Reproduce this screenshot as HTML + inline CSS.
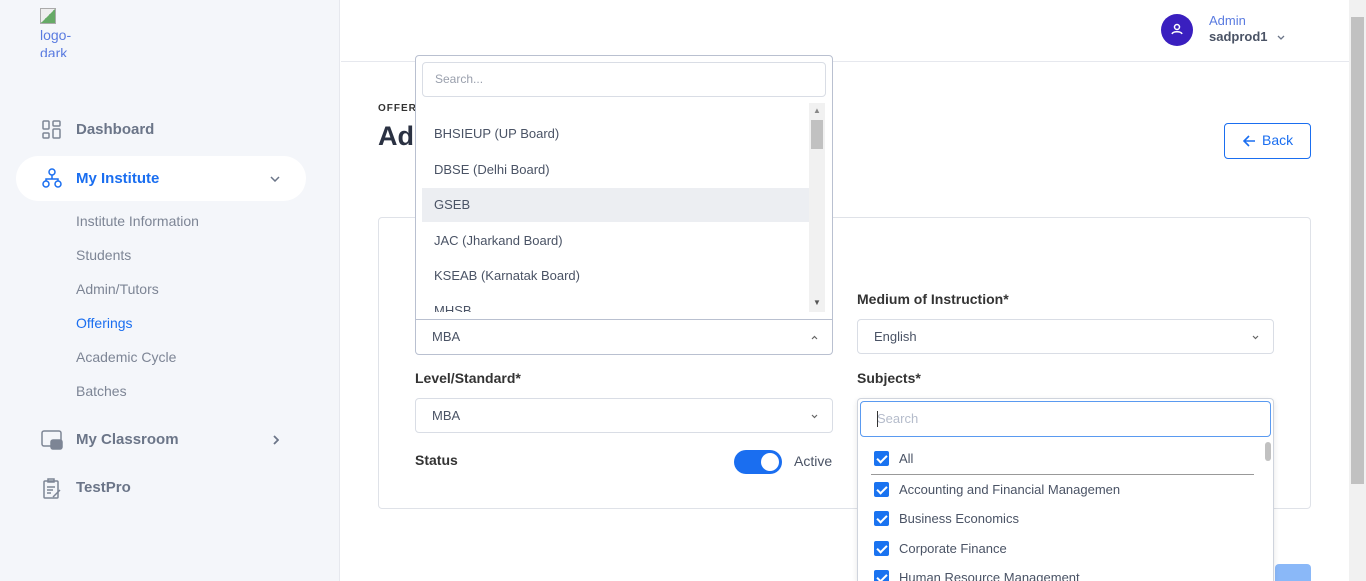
<!DOCTYPE html><html style="width:1366px;height:581px;overflow:hidden"><head><style>
*{box-sizing:border-box;margin:0;padding:0}
body{width:1366px;height:581px;overflow:hidden;font-family:"Liberation Sans",sans-serif;background:#fff;position:relative;color:#333}
.a{position:absolute}
.sb{left:0;top:0;width:340px;height:581px;background:#f4f6fa;border-right:1px solid #e6e8ee}
.nav{font-weight:bold;font-size:15px;color:#6b7588}
.sub{font-size:14px;color:#7d8595;left:76px}
.lbl{font-size:14px;color:#333;font-weight:bold}
.sel{border:1px solid #d9dde5;border-radius:4px;background:#fff;font-size:13px;color:#4a5365;padding-left:16px;line-height:34px}
.opt{left:434px;font-size:13px;color:#4a5365}
.cb{width:15px;height:15px;background:#1a73f0;border-radius:2px;left:874px}
.cb:after{content:"";position:absolute;left:5px;top:2px;width:4px;height:8px;border:solid #fff;border-width:0 2px 2px 0;transform:rotate(45deg)}
.ct{left:899px;font-size:13px;color:#4a5365}
</style></head><body>
<div class="a sb"></div>
<div class="a" style="left:40px;top:8px;width:16px;height:16px;border:1px solid #aaa;background:linear-gradient(135deg,#eee 50%,#6a6 50%)"></div>
<div class="a" style="left:40px;top:26px;font-size:14px;color:#5a7be0;line-height:18px;height:31px;overflow:hidden">logo-<br>dark</div>
<svg class="a" style="left:42px;top:120px" width="20" height="20" fill="none" stroke="#7d8595" stroke-width="1.5"><rect x="1" y="1" width="6" height="8" rx="1"/><rect x="11" y="1" width="7" height="5" rx="1"/><rect x="1" y="13" width="6" height="5" rx="1"/><rect x="11" y="9" width="7" height="9" rx="1"/></svg>
<div class="a nav" style="left:76px;top:121px">Dashboard</div>
<div class="a" style="left:16px;top:156px;width:290px;height:45px;background:#fff;border-radius:23px"></div>
<svg class="a" style="left:42px;top:168px" width="20" height="21" fill="none" stroke="#1a6ef0" stroke-width="1.5"><circle cx="10" cy="4" r="3"/><circle cx="4" cy="16" r="3"/><circle cx="16" cy="16" r="3"/><path d="M10 7v4M4 13v-2h12v2"/></svg>
<div class="a nav" style="left:76px;top:170px;color:#1a6ef0">My Institute</div>
<svg class="a" style="left:270px;top:176px" width="10" height="6" fill="none" stroke="#6b7588" stroke-width="1.5"><path d="M1 1l4 4 4-4"/></svg>
<div class="a sub" style="top:213px">Institute Information</div>
<div class="a sub" style="top:247px">Students</div>
<div class="a sub" style="top:281px">Admin/Tutors</div>
<div class="a sub" style="top:315px;color:#1a6ef0">Offerings</div>
<div class="a sub" style="top:349px">Academic Cycle</div>
<div class="a sub" style="top:383px">Batches</div>
<svg class="a" style="left:41px;top:430px" width="22" height="20" fill="none" stroke="#7d8595" stroke-width="1.5"><rect x="1" y="1" width="19" height="15" rx="2"/><rect x="10" y="10" width="11" height="9" rx="2" fill="#7d8595"/></svg>
<div class="a nav" style="left:76px;top:431px">My Classroom</div>
<svg class="a" style="left:273px;top:435px" width="6" height="10" fill="none" stroke="#6b7588" stroke-width="1.8"><path d="M1 1l4 4-4 4"/></svg>
<svg class="a" style="left:43px;top:478px" width="19" height="21" fill="none" stroke="#7d8595" stroke-width="1.5"><rect x="1" y="3" width="14" height="17" rx="1"/><rect x="5" y="1" width="6" height="3"/><path d="M4 9h8M4 12h6M4 15h4M10 19l7-7"/></svg>
<div class="a nav" style="left:76px;top:479px">TestPro</div>
<div class="a" style="left:341px;top:61px;width:1008px;height:1px;background:#e6e8ee"></div>
<div class="a" style="left:1161px;top:14px;width:32px;height:32px;border-radius:50%;background:#3a1fbf"></div>
<svg class="a" style="left:1171px;top:23px" width="12" height="12" fill="none" stroke="#fff" stroke-width="1.5"><circle cx="6" cy="4" r="2.5"/><path d="M1 11c1-3 9-3 10 0"/></svg>
<div class="a" style="left:1209px;top:13px;font-size:13px;color:#5a7be0">Admin</div>
<div class="a" style="left:1209px;top:29px;font-size:13px;color:#4a5365;font-weight:bold">sadprod1</div>
<svg class="a" style="left:1277px;top:35px" width="8" height="5" fill="none" stroke="#6b7588" stroke-width="1.3"><path d="M1 1l3 3 3-3"/></svg>
<div class="a" style="left:1349px;top:0;width:17px;height:581px;background:#f1f1f1"></div>
<div class="a" style="left:1351px;top:17px;width:13px;height:467px;background:#c1c1c1"></div>
<div class="a" style="left:378px;top:103px;font-size:10px;font-weight:bold;letter-spacing:1px;color:#333">OFFER</div>
<div class="a" style="left:378px;top:121px;font-size:27px;font-weight:bold;color:#2a3142">Ad</div>
<div class="a" style="left:1224px;top:123px;width:87px;height:36px;border:1px solid #1a6ef0;border-radius:4px"></div>
<svg class="a" style="left:1243px;top:135px" width="13" height="12" fill="none" stroke="#1a6ef0" stroke-width="1.6"><path d="M12 6H1M6 1L1 6l5 5"/></svg>
<div class="a" style="left:1262px;top:132px;font-size:14px;color:#1a6ef0">Back</div>
<div class="a" style="left:378px;top:217px;width:933px;height:292px;border:1px solid #dfe2e8;border-radius:4px"></div>
<div class="a lbl" style="left:857px;top:291px">Medium of Instruction*</div>
<div class="a sel" style="left:857px;top:319px;width:417px;height:35px">English</div>
<svg class="a" style="left:1252px;top:335px" width="7" height="5" fill="none" stroke="#666" stroke-width="1.2"><path d="M1 1l2.5 2.5 2.5-2.5"/></svg>
<div class="a lbl" style="left:415px;top:370px">Level/Standard*</div>
<div class="a sel" style="left:415px;top:398px;width:418px;height:35px">MBA</div>
<svg class="a" style="left:811px;top:414px" width="7" height="5" fill="none" stroke="#666" stroke-width="1.2"><path d="M1 1l2.5 2.5 2.5-2.5"/></svg>
<div class="a lbl" style="left:415px;top:452px">Status</div>
<div class="a" style="left:734px;top:450px;width:48px;height:24px;border-radius:12px;background:#1a6ef0"></div>
<div class="a" style="left:761px;top:453px;width:18px;height:18px;border-radius:50%;background:#fff"></div>
<div class="a" style="left:794px;top:453px;font-size:14px;color:#4a5365">Active</div>
<div class="a lbl" style="left:857px;top:370px">Subjects*</div>
<div class="a" style="left:1275px;top:564px;width:36px;height:17px;background:#8ab8f8;border-radius:4px 4px 0 0"></div>
<div class="a" style="left:415px;top:55px;width:418px;height:300px;border:1px solid #b9c0d0;border-radius:4px;background:#fff"></div>
<div class="a" style="left:422px;top:62px;width:404px;height:35px;border:1px solid #d9dde5;border-radius:4px;font-size:12px;color:#9aa0ad;padding-left:12px;line-height:33px">Search...</div>
<div class="a" style="left:809px;top:103px;width:16px;height:209px;background:#f1f1f1"></div>
<div class="a" style="left:811px;top:120px;width:12px;height:29px;background:#c1c1c1"></div>
<div class="a" style="left:813px;top:106px;font-size:8px;color:#888">▲</div>
<div class="a" style="left:813px;top:298px;font-size:8px;color:#555">▼</div>
<div class="a" style="left:422px;top:188px;width:387px;height:34px;background:#eceef2"></div>
<div class="a opt" style="top:126px">BHSIEUP (UP Board)</div>
<div class="a opt" style="top:162px">DBSE (Delhi Board)</div>
<div class="a opt" style="top:197px">GSEB</div>
<div class="a opt" style="top:233px">JAC (Jharkand Board)</div>
<div class="a opt" style="top:268px">KSEAB (Karnatak Board)</div>
<div class="a" style="left:434px;top:303px;height:9px;overflow:hidden;font-size:13px;color:#4a5365">MHSB</div>
<div class="a" style="left:416px;top:319px;width:416px;height:1px;background:#b9c0d0"></div>
<div class="a" style="left:432px;top:329px;font-size:13px;color:#4a5365">MBA</div>
<svg class="a" style="left:811px;top:335px" width="7" height="5" fill="none" stroke="#666" stroke-width="1.2"><path d="M1 4l2.5-2.5 2.5 2.5"/></svg>
<div class="a" style="left:857px;top:398px;width:417px;height:183px;border:1px solid #cfd4dd;border-bottom:none;border-radius:4px 4px 0 0;background:#fff;box-shadow:0 2px 6px rgba(0,0,0,.1)"></div>
<div class="a" style="left:860px;top:401px;width:411px;height:36px;border:1px solid #5a9af0;border-radius:4px;font-size:13px;color:#b5bccb;padding-left:16px;line-height:34px">Search</div>
<div class="a" style="left:877px;top:411px;width:1px;height:16px;background:#333"></div>
<div class="a" style="left:1265px;top:442px;width:6px;height:19px;border-radius:3px;background:#c1c1c1"></div>
<div class="a cb" style="top:451px"></div><div class="a ct" style="top:451px">All</div>
<div class="a" style="left:871px;top:474px;width:383px;height:1px;background:#999"></div>
<div class="a cb" style="top:482px"></div><div class="a ct" style="top:482px">Accounting and Financial Managemen</div>
<div class="a cb" style="top:511px"></div><div class="a ct" style="top:511px">Business Economics</div>
<div class="a cb" style="top:541px"></div><div class="a ct" style="top:541px">Corporate Finance</div>
<div class="a" style="left:860px;top:568px;width:400px;height:13px;overflow:hidden"><div class="a cb" style="left:14px;top:2px"></div><div class="a ct" style="left:39px;top:2px">Human Resource Management</div></div>
</body></html>
